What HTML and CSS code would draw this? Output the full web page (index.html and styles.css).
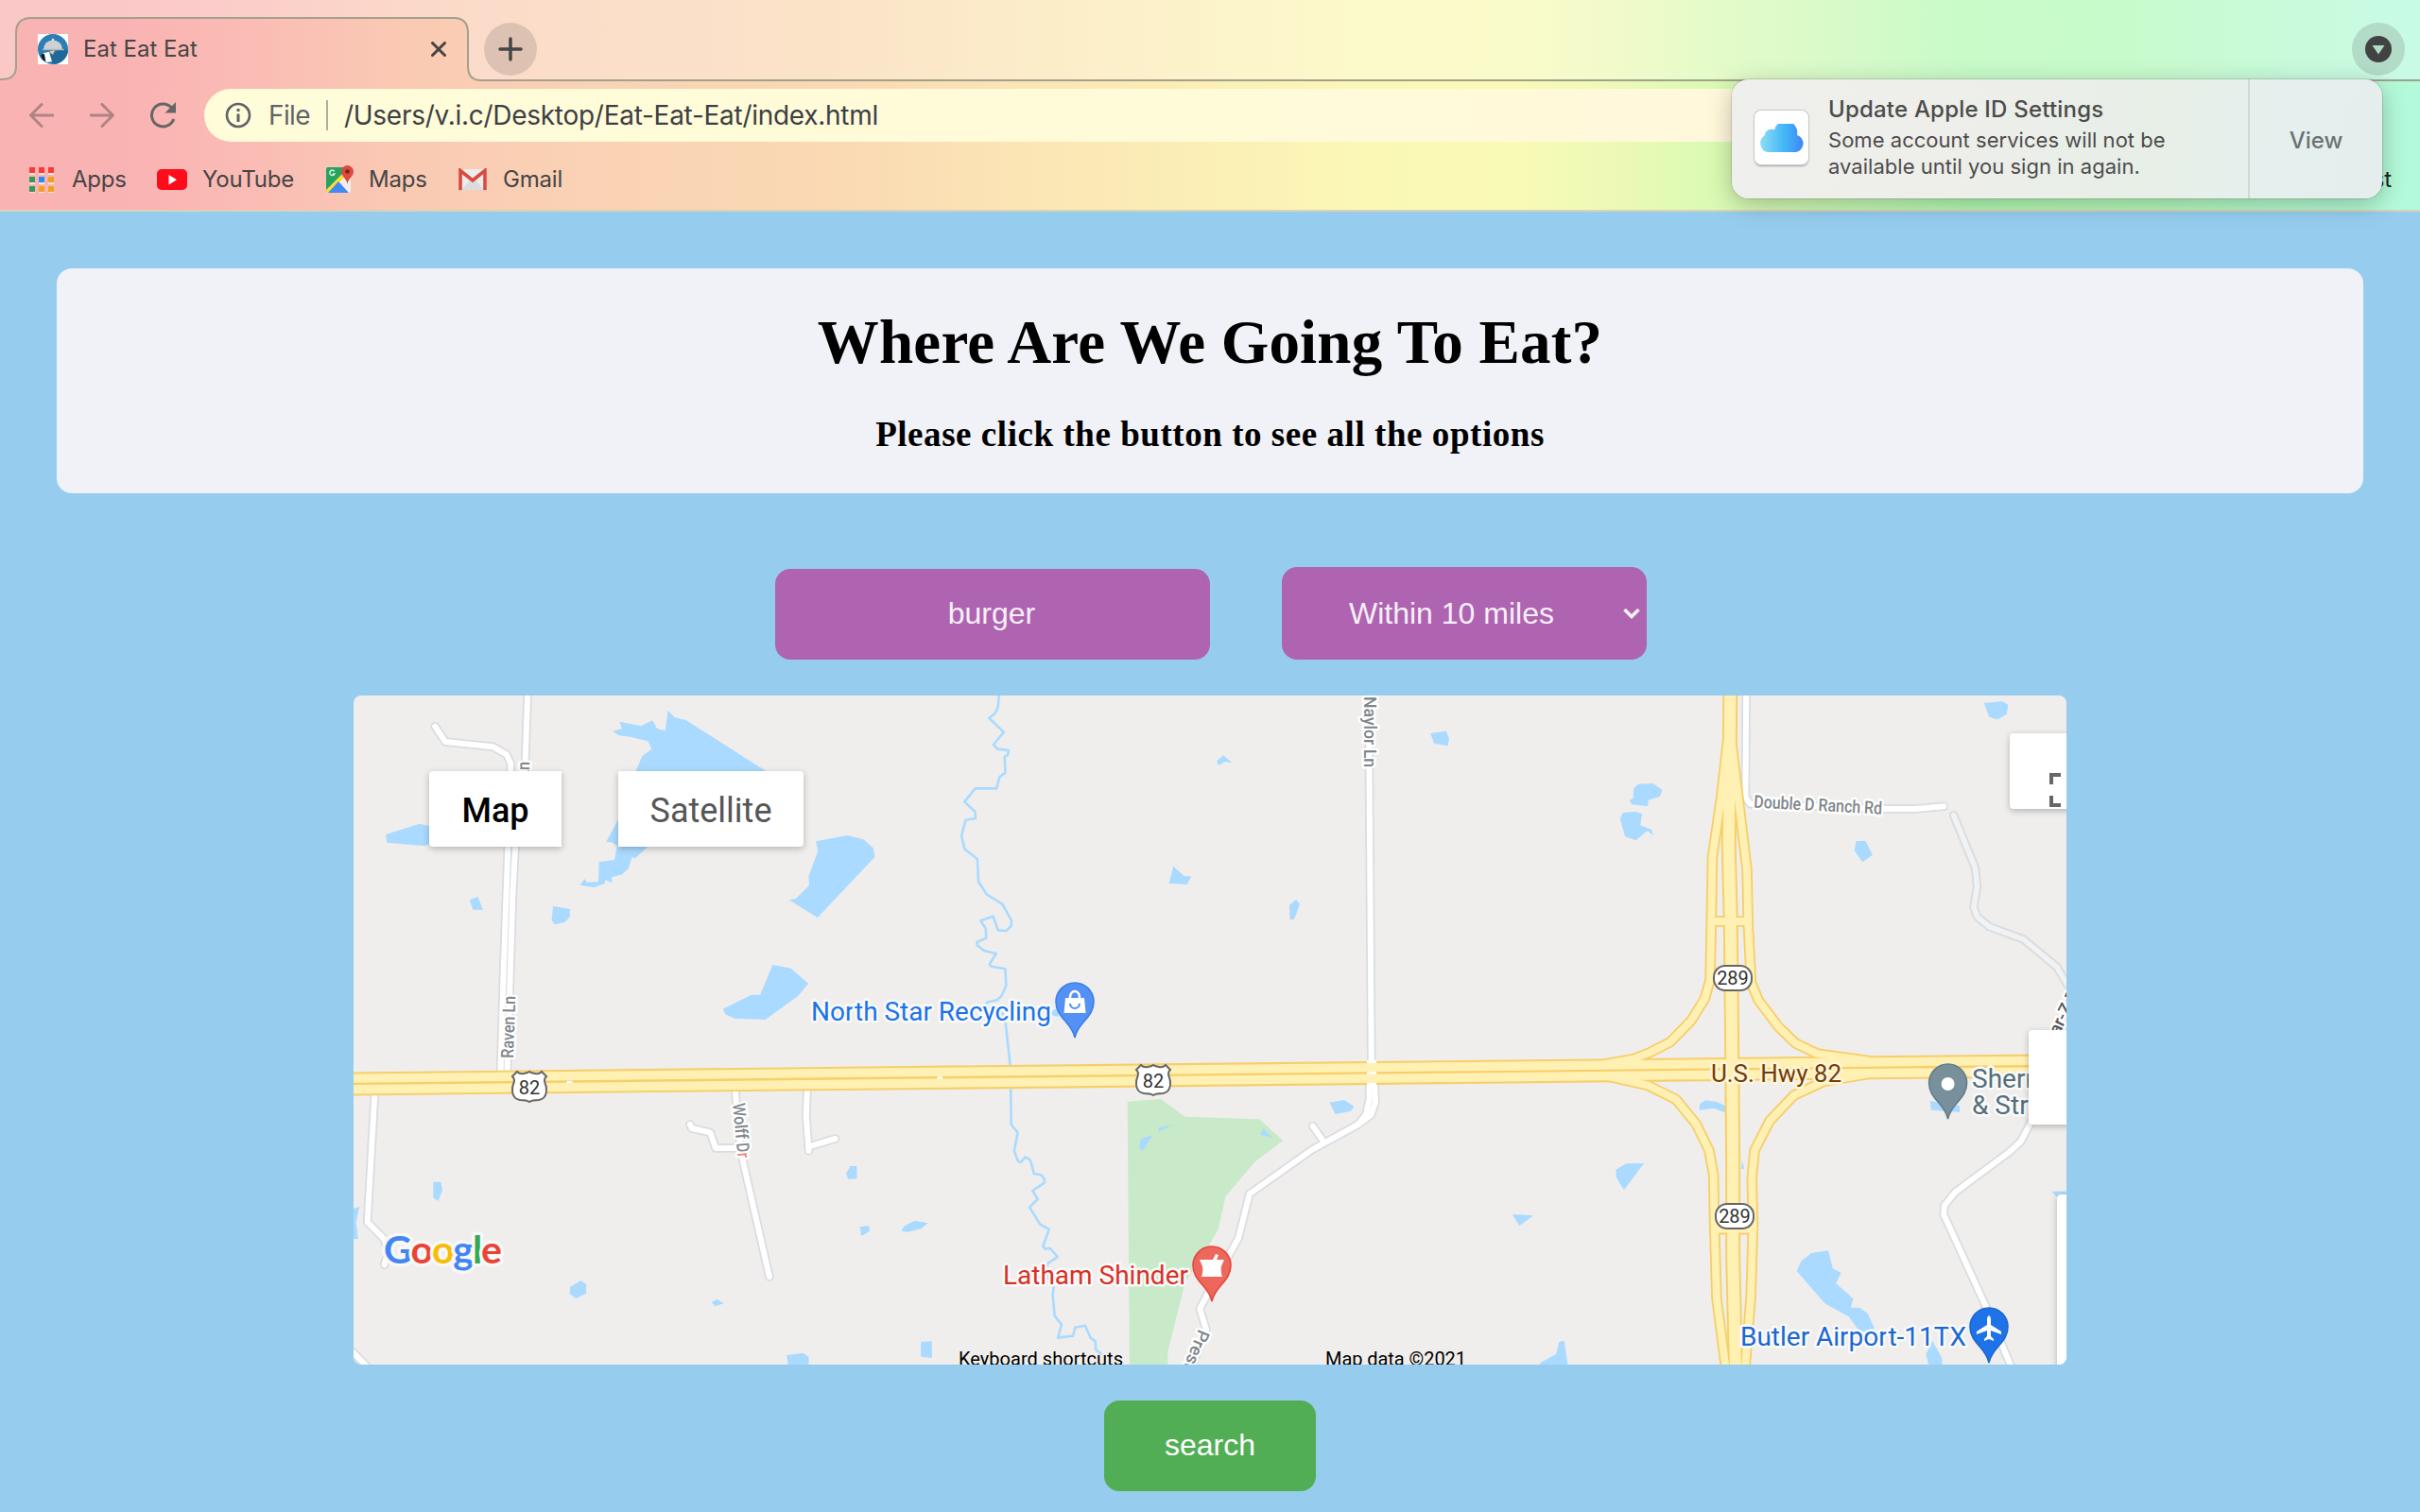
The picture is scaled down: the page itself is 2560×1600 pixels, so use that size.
FILE: index.html
```html
<!DOCTYPE html>
<html lang="en">
<head>
<meta charset="utf-8">
<title>Eat Eat Eat</title>
<link rel="stylesheet" href="styles.css">
</head>
<body>
<header class="chrome">
  <svg class="strip-shape" viewBox="0 0 2560 86" width="2560" height="86">
    <path fill="#fff" fill-opacity=".28" d="M0 0H2560V85H509Q495 85 495 70V35Q495 19 480 19H33Q17 19 17 35V70Q17 85 2 85H0Z"/>
    <path fill="none" stroke="#a3a18c" stroke-width="2" d="M2560 85H509Q495 85 495 70V35Q495 19 480 19H33Q17 19 17 35V70Q17 84 2 84H0"/>
  </svg>
  <div class="tabs">
    <svg class="favicon" viewBox="0 0 32 32" width="32" height="32">
      <rect width="32" height="32" fill="#fff"/><circle cx="16" cy="16" r="16" fill="#2b7fb4"/>
      <path d="M27 15L32 18A16 16 0 0 1 17 32L10 23Z" fill="#20689a"/>
      <path d="M6 16A10 9.5 0 0 1 26 16Z" fill="#cfd2d4"/><circle cx="16" cy="6" r="1.3" fill="#e6e6e6"/>
      <path d="M5 16.5H28" stroke="#aeb6ba" stroke-width="1.4"/><path d="M12 18.5L18 17L16 22Z" fill="#edc3a0"/>
      <path d="M6 20L12 19L15 29L9 30Z" fill="#fff"/><path d="M3 22L7 21L8 29L5 27Z" fill="#16191c"/>
    </svg>
    <span class="tab-title">Eat Eat Eat</span>
    <svg class="tab-close" viewBox="0 0 16 16" width="16" height="16"><path d="M1.500 1.500L14.500 14.500M14.500 1.500L1.500 14.500" stroke="#454545" stroke-width="3" stroke-linecap="round"/></svg>
    <span class="round-btn new-tab"><svg viewBox="0 0 26 26" width="26" height="26"><path d="M13 2V24M2 13H24" stroke="#454545" stroke-width="3.500" stroke-linecap="round"/></svg></span>
    <span class="round-btn tab-search"><svg viewBox="0 0 28 28" width="28" height="28"><circle cx="14" cy="14" r="14" fill="#424242"/><path d="M7.500 10H20.500L14 19.500Z" fill="#aeddc5"/></svg></span>
  </div>
  <div class="toolbar">
    <svg class="nav" viewBox="0 0 26 26" width="26" height="26"><path d="M25 13H2M13 1.500L1.500 13L13 24.500" class="nav-arrow"/></svg>
    <svg class="nav" viewBox="0 0 26 26" width="26" height="26"><path d="M1 13H24M13 1.500L24.500 13L13 24.500" class="nav-arrow"/></svg>
    <svg class="reload" viewBox="0 0 28 28" width="28" height="28"><path d="M22.500 6A12 12 0 1 0 24.800 18" fill="none" stroke="#666" stroke-width="3"/><path d="M27 0V11.500H15.500Z" fill="#666"/></svg>
    <div class="omnibox">
      <svg viewBox="0 0 28 28" width="28" height="28"><circle cx="14" cy="14" r="12" fill="none" stroke="#5f6368" stroke-width="2.600"/><path d="M14 12.500V21M14 7V10" stroke="#5f6368" stroke-width="3"/></svg>
      <span class="scheme">File</span><i class="sep"></i><span class="url">/Users/v.i.c/Desktop/Eat-Eat-Eat/index.html</span>
    </div>
  </div>
  <div class="bookmarks">
    <span class="bm bm-apps"><svg viewBox="0 0 26 27" width="26" height="27">
      <path fill="#f5e3dc" d="M0 2h6v6H0zM10 2h6v6h-6zM20 2h6v6h-6zM0 12h6v6H0zM10 12h6v6h-6zM20 12h6v6h-6zM0 22h6v5H0zM10 22h6v5h-6zM20 22h6v5h-6z"/>
      <path fill="#f93a37" d="M0 0h6v6H0zM10 0h6v6h-6zM20 0h6v6h-6z"/><path fill="#35995c" d="M0 10h6v6H0zM0 20h6v6H0z"/><path fill="#2b8af5" d="M10 10h6v6h-6z"/><path fill="#efa023" d="M20 10h6v6h-6zM10 20h6v6h-6zM20 20h6v6h-6z"/></svg><span>Apps</span></span>
    <span class="bm bm-youtube"><svg viewBox="0 0 32 22" width="32" height="22"><rect width="32" height="22" rx="5" fill="#fe0b1c"/><path d="M12.500 6V16.500L21 11.200Z" fill="#fff"/></svg><span>YouTube</span></span>
    <span class="bm bm-maps"><svg viewBox="0 0 30 30" width="30" height="30"><rect x="1" y="2" width="26" height="27" rx="2" fill="#eef0f0"/><path d="M1 4Q1 2 3 2H21L20 11L3 28Q1 28 1 26Z" fill="#25a35f"/><path d="M1 26L18 9L21 12L4 29Q1 29 1 26Z" fill="#fbdd3b"/><path d="M3 29L14 17L25 29Z" fill="#4488f3"/><path d="M23.500 20C23 14 17 12 17 6.500A6.500 6.500 0 0 1 30 6.500C30 12 24 14 23.500 20Z" fill="#dd4b3f"/><circle cx="23.500" cy="6.500" r="2.300" fill="#7c231d"/><path d="M9.800 6.300A2.700 2.700 0 1 0 10 9H7.800" fill="none" stroke="#d8f0e2" stroke-width="1.500"/></svg><span>Maps</span></span>
    <span class="bm bm-gmail"><svg viewBox="0 0 32 24" width="32" height="24"><rect x="1" y="1" width="30" height="22" rx="2" fill="#ececec"/><path d="M4 23L13 13L16 15L19 13L28 23Z" fill="#dcdcdc"/><path d="M3 23V2.500L16 13L29 2.500V23" fill="none" stroke="#d94a3f" stroke-width="3.600"/></svg><span>Gmail</span></span>
    <span class="reading">Reading List</span>
  </div>
</header>

<aside class="notice">
  <div class="notice-icon"><svg viewBox="0 0 48 30" width="48" height="30">
    <defs><linearGradient id="cl" x1="0" x2="1"><stop offset="0" stop-color="#8fdcf4"/><stop offset=".55" stop-color="#43b8f8"/><stop offset="1" stop-color="#3f86f3"/></linearGradient></defs>
    <path fill="url(#cl)" d="M9 30A9 9.500 0 0 1 5.500 12.500A7.500 7.500 0 0 1 16 6.500A12 12 0 0 1 40 12A9.300 9.300 0 0 1 39 30Z"/></svg></div>
  <div class="notice-text"><strong>Update Apple ID Settings</strong><p><span>Some account services will not be</span><br><span class="l2">available until you sign in again.</span></p></div>
  <div class="notice-action">View</div>
</aside>

<main class="page">
  <section class="card">
    <h1>Where Are We Going To Eat?</h1>
    <h2>Please click the button to see all the options</h2>
  </section>
  <form class="controls">
    <div class="field food">burger</div>
    <div class="field radius"><span>Within 10 miles</span><svg viewBox="0 0 20 14" width="20" height="14"><path d="M2.500 3L10 10.500L17.500 3" fill="none" stroke="#f6f0f7" stroke-width="3.600"/></svg></div>
  </form>
  <div class="map">
    <svg class="map-canvas" viewBox="374 736 1812 708" width="1812" height="708">
      <defs>
        <g id="local-west"><path d="M232 116L260 165L390 181L426 205L438 235L436 300L430 500L418 900L410 1215"/><path d="M484 0L477 235L450 500L443 650L428 1215"/><path d="M68 1280L48 1690L95 1745L103 1790L94 1825"/><path d="M0 2092L50 2152"/><path d="M1048 1267L1056 1400L1070 1500L1141 1863"/><path d="M925 1380L930 1392L980 1405L995 1455L1060 1455"/><path d="M1244 1267L1241 1350L1248 1463L1248 1450L1320 1425"/></g>
        <g id="local-mid"><path d="M1254 0L1262 1250"/><path d="M1256 1245V1300L1246 1350L1225 1380"/><path d="M1270 1245L1272 1310L1260 1350L1225 1380L1100 1460L930 1600L900 1740L815 1920L795 1965L812 2030L770 2160"/><path d="M1102 1385L1130 1432"/></g>
        <g id="local-east"><path d="M690 0L688 340L700 362L1050 378L1135 378L1210 370"/><path d="M1450 1350L1412 1435L1385 1465L1240 1595L1212 1637L1210 1665L1320 1955L1395 2170"/></g>
        <path id="private" d="M1236 398L1293 565L1298 625L1289 690L1298 720L1330 752L1420 792L1508 880L1540 945"/>
        <g id="ramps"><path d="M640 170L623 350L601 530L598 740L595 920L581 980L545 1050L490 1118L435 1152L395 1171L310 1190"/><path d="M652 170L670 350L692 570L695 740L703 930L722 985L775 1070L820 1122L877 1155L1010 1177"/><path d="M310 1223L430 1255L505 1300L558 1378L592 1462L604 1540L606 1680L612 1930L638 2170"/><path d="M1010 1220L895 1243L815 1288L752 1368L712 1462L705 1550L708 1700L702 1930L686 2170"/><path d="M600 735H695M605 1712H708"/></g>
        <path id="trunk" d="M648 0L646 240L644 500L649 730L652 1080L655 1500L655 1800L662 2150"/>
        <path id="hwy-n" d="M370 1141.200L960 1134.700L1570 1128.500L1973 1124L2190 1122"/>
        <path id="hwy-s" d="M370 1152.800L960 1146.500L1570 1140L1973 1135.600L2190 1133.500"/>
        <path id="pin" d="M0 0C-3 -16 -20 -21 -20 -38A20 20 0 1 1 20 -38C20 -21 3 -16 0 0Z"/>
        <path id="shield" d="M-13 -16Q-10 -13 -6 -14Q-2 -14.500 0 -16Q2 -14.500 6 -14Q10 -13 13 -16L18 -11Q15 -8 16.500 -4Q18.500 0 18 5Q17 13 10 14Q3 14 0 16Q-3 14 -10 14Q-17 13 -18 5Q-18.500 0 -16.500 -4Q-15 -8 -18 -11Z"/>
      </defs>
      <rect x="374" y="736" width="1812" height="708" fill="#efeeec"/>
      <path fill="#c8eac9" transform="translate(960 730) scale(.38903 .33333)" d="M598 1307L688 1299L755 1355L955 1363L962 1368L1021 1431L945 1498L865 1608L845 1713L810 1783L755 1880L708 2100V2160H604Z"/>
      <g class="water">
        <path transform="translate(370 730) scale(.38903 .33333)" d="M734 101L740 124L714 131L733 145L765 150L811 163L821 188L795 211L778 258L730 412L697 483L713 484L727 496L720 540L678 546L676 609L645 611L638 600L626 620L665 627L693 615L695 604L713 612L712 595L741 586L758 567L767 532L777 534L808 500L900 400L1132 258L914 96L883 87L865 65L858 129L836 124L823 97L792 115ZM98 459L190 425L240 440V485L201 495L101 485ZM326 667L349 657L362 698H335ZM553 687L599 696V720L585 737L557 745L549 731ZM1268 481L1352 462L1397 475L1423 502L1428 530L1272 723L1194 667L1213 663L1249 621L1248 590L1273 512ZM1150 873L1200 884L1247 932L1219 972L1130 1047L1046 1043L1021 1030L1015 1013L1091 969L1116 968ZM227 1562H248L252 1588L241 1622L227 1613ZM10 1647L26 1641L17 1692L23 1743H10ZM599 1896L628 1875L643 1887V1916L615 1932L598 1918ZM984 1944L999 1935L1017 1948L993 1957ZM1349 1537L1361 1512H1379V1552L1356 1553ZM1387 1705L1411 1701L1414 1718L1391 1734ZM1500 1718L1507 1703L1535 1685L1572 1693L1554 1711L1516 1721ZM1188 2112L1232 2105L1248 2118V2150H1193ZM1553 2070L1583 2068V2121L1553 2117Z"/>
        <path transform="translate(960 730) scale(.38903 .33333)" d="M1422 138L1465 131L1473 155L1469 178L1432 170ZM841 226L859 208L882 231L863 229L846 240ZM723 560L753 592H772L760 618L711 614ZM1057 666L1067 680L1051 730L1040 729L1038 683ZM1148 1310L1187 1302L1214 1322L1206 1337L1163 1347ZM380 1030L410 1008V1037ZM681 1390L719 1381L684 1403ZM635 1424L667 1413L641 1463L629 1455ZM967 1391L992 1422L960 1412Z"/>
        <path transform="translate(1570 730) scale(.40179 .33333)" d="M1316 42L1365 37L1380 48L1375 78L1352 94L1330 86ZM406 299L445 297L469 318L463 338L432 350L431 370L389 364L383 350L392 345L394 313ZM365 391L397 386L416 394L411 430L440 443L446 461L429 448L400 478L371 466L358 410ZM979 481L1004 479L1023 524L996 547L975 511ZM567 1315L583 1303L610 1307L635 1320V1342L604 1328L567 1334ZM347 1523L374 1504L421 1503L368 1588L348 1548ZM74 1665L130 1669L93 1701ZM679 1495L685 1520L677 1521ZM823 1845L835 1813L862 1788L906 1780L918 1837L940 1851L926 1884L972 1933L965 1961H988L1010 1980L1028 2028L990 2040L960 1990L897 1948ZM1174 1305L1252 1320V1341L1177 1334ZM1494 1592H1540V1610H1508ZM148 2136L190 2108L197 2070L211 2066L221 2150H148ZM1180 2066L1205 2120L1207 2150H1172L1163 2110Z"/>
      </g>
      <path class="river" transform="translate(960 730) scale(.38903 .33333)" d="M250 0L246 55L238 75L222 90L262 134L234 174L245 188L275 192L272 208L264 212L266 263L250 277L242 313H184L155 355L184 387L185 408L158 413L147 463L155 505L190 537L193 609L216 650L258 680L283 733L282 750L268 765L246 763L233 719L199 733L213 758L214 788L189 801V810L208 828L241 837L223 871L228 878L266 886L268 940L255 973L243 985L215 992V1010L240 1015L262 1030L268 1070L280 1200L282 1380L300 1405L290 1463L300 1495L308 1500L320 1483L334 1493L344 1536L364 1540L373 1555L372 1565L340 1590L354 1617L332 1642L360 1696L385 1713L368 1767L375 1775L388 1773L408 1800L380 1822L378 1860L398 1890L395 1920L400 1987L419 2015L409 2057L450 2051L456 2024L483 2018L498 2057L511 2068L512 2095L528 2110"/>
      <g class="local-case"><use href="#local-west" transform="translate(370 730) scale(.38903 .33333)"/><use href="#local-mid" transform="translate(960 730) scale(.38903 .33333)"/><use href="#local-east" transform="translate(1570 730) scale(.40179 .33333)"/><use href="#private" transform="translate(1570 730) scale(.40179 .33333)"/></g>
      <g class="local-fill"><use href="#local-west" transform="translate(370 730) scale(.38903 .33333)"/><use href="#local-mid" transform="translate(960 730) scale(.38903 .33333)"/><use href="#local-east" transform="translate(1570 730) scale(.40179 .33333)"/></g>
      <use class="private-fill" href="#private" transform="translate(1570 730) scale(.40179 .33333)"/>
      <g class="major-case"><use class="w-hwy" href="#hwy-n"/><use class="w-hwy" href="#hwy-s"/><g transform="translate(1570 730) scale(.40179 .33333)"><use class="w-ramp" href="#ramps"/><use class="w-trunk" href="#trunk"/></g></g>
      <path d="M526 1130V1138M534 1130V1138M1446 1122H1456V1152H1446Z" fill="#fff" stroke="#fff" stroke-width="0"/>
      <g class="major-fill"><g transform="translate(1570 730) scale(.40179 .33333)"><use class="w-ramp" href="#ramps"/><use class="w-trunk" href="#trunk"/></g><use class="w-hwy" href="#hwy-n"/><use class="w-hwy" href="#hwy-s"/></g>
      <path d="M599.500 1145H605.500M991.500 1140.600H997" stroke="#fff" stroke-width="2.500"/>

      <g class="street">
        <text transform="translate(1443 737) rotate(90)" textLength="75" lengthAdjust="spacingAndGlyphs">Naylor Ln</text>
        <text transform="translate(543 1120) rotate(-88)" textLength="66" lengthAdjust="spacingAndGlyphs">Raven Ln</text>
        <text transform="translate(559 872) rotate(-89)" textLength="66" lengthAdjust="spacingAndGlyphs">Raven Ln</text>
        <text transform="translate(775 1168) rotate(84.500)" textLength="58" lengthAdjust="spacingAndGlyphs">Wolff D<tspan fill="#e88a82">r</tspan></text>
        <text transform="translate(1268 1406) rotate(112)">Preston Rd</text>
        <text transform="translate(2178 1096) rotate(-64)" fill="#555">ar-Z Dr</text>
        <text transform="translate(1855 854.500) rotate(3)" textLength="136" lengthAdjust="spacingAndGlyphs">Double D Ranch Rd</text>
      </g>
      <g class="shields">
        <use href="#shield" x="560" y="1150"/><text x="560" y="1158">82</text>
        <use href="#shield" x="1220" y="1143"/><text x="1220" y="1151">82</text>
        <rect x="1813" y="1022" width="40" height="26" rx="12"/><text x="1833" y="1042">289</text>
        <rect x="1815" y="1274" width="40" height="26" rx="12"/><text x="1835" y="1294">289</text>
      </g>
      <g class="poi">
        <text x="1810" y="1145" textLength="138" class="hwy-name">U.S. Hwy 82</text>
        <text x="858" y="1080" textLength="254" fill="#1a73e8">North Star Recycling</text>
        <text x="1061" y="1359" textLength="196" fill="#d93025">Latham Shinder</text>
        <text x="1841" y="1424" textLength="239" fill="#1967d2">Butler Airport-11TX</text>
        <text x="2086" y="1151" fill="#546e7a">Sherm</text>
        <text x="2086" y="1179" fill="#546e7a">&amp; Stru</text>
      </g>
      <g stroke-width="1.600">
        <g transform="translate(1137 1098)"><use href="#pin" fill="#5491f5" stroke="#3b7ded"/><path fill="#fff" d="M-10 -42H10L11.500 -26H-11.500Z"/><path d="M-5 -41V-43A5 6 0 0 1 5 -43V-41" fill="none" stroke="#fff" stroke-width="2.500"/><path d="M-5 -36A5 5 0 0 0 5 -36" fill="none" stroke="#5491f5" stroke-width="2.200"/></g>
        <g transform="translate(1282 1377)"><use href="#pin" fill="#ee675c" stroke="#e4463a"/><path fill="#fff" d="M-13 -44H1L4 -50L7 -49L5 -44H13L10 -37Q9 -31 11 -26H-11Q-9 -31 -10 -37Z"/></g>
        <g transform="translate(2060.600 1184)"><use href="#pin" fill="#78909c" stroke="#607d8b"/><circle cy="-37" r="7" fill="#fff"/></g>
        <g transform="translate(2104 1442)"><use href="#pin" fill="#1f73e8" stroke="#1967d2"/><path fill="#fff" d="M0 -50Q2 -49 2 -46V-40L13 -33V-30L2 -34V-28L5 -25V-23L0 -25L-5 -23V-25L-2 -28V-34L-13 -30V-33L-2 -40V-46Q-2 -49 0 -50Z"/></g>
      </g>
      <text class="brand" x="406" y="1337" textLength="125"><tspan fill="#4285f4">G</tspan><tspan fill="#ea4335">o</tspan><tspan fill="#fbbc05">o</tspan><tspan fill="#4285f4">g</tspan><tspan fill="#34a853">l</tspan><tspan fill="#ea4335">e</tspan></text>
      <g class="legal"><text x="1014" y="1445" textLength="174">Keyboard shortcuts</text><text x="1402" y="1445" textLength="149">Map data ©2021</text></g>
    </svg>
    <div class="map-types"><button class="type on">Map</button><button class="type sat">Satellite</button></div>
    <div class="ctl fullscreen"><svg viewBox="0 0 36 36" width="36" height="36"><path d="M12 2H2V12M2 24V34H12" fill="none" stroke="#666" stroke-width="4"/></svg></div>
    <div class="ctl pegman"></div>
    <div class="ctl zoom"></div>
  </div>
  <button class="search">search</button>
</main>
</body>
</html>
```
FILE: styles.css
```css
* { box-sizing: border-box; }
body { margin: 0; width: 2560px; height: 1600px; overflow: hidden; position: relative; background: #96cdef; font-family: "Liberation Sans", Arial, sans-serif; }
button { border: 0; font: inherit; padding: 0; }

.chrome {
  position: relative; height: 224px; border-bottom: 2px solid #d8d3b6;
  display: grid; grid-template-rows: 86px 72px 64px;
  font-family: Inter, "Noto Sans", sans-serif; color: #454545;
  background: linear-gradient(90deg, #fab3b3 0, #fab3b3 130px, #fabdb5 280px, #facab3 430px, #fad2b5 620px, #fad9b3 880px, #fbe5b5 1080px, #fbefb6 1280px, #fbf8b6 1450px, #f9fab6 1600px, #eef9b6 1700px, #dcfab3 1800px, #c8f9b4 1950px, #b3fab3 2080px, #b3fab8 2250px, #b3facb 2400px, #b3fadc 2560px);
}
.strip-shape { position: absolute; left: 0; top: 0; }
.tabs, .toolbar, .bookmarks { position: relative; display: flex; align-items: center; }
.tabs { padding: 18px 16px 0 40px; }
.tab-title { margin-left: 16px; width: 368px; font-size: 24px; padding-bottom: 2px; }
.tab-close { margin-right: 40px; }
.round-btn { width: 56px; height: 56px; border-radius: 50%; display: grid; place-items: center; background: rgba(70, 60, 60, .16); }
.tab-search { margin-left: auto; }
.toolbar { padding-left: 31px; }
.nav { margin-right: 38px; }
.nav-arrow { fill: none; stroke: #403c3c; stroke-opacity: .4; stroke-width: 3; stroke-linecap: round; }
.reload { margin-right: 29px; }
.omnibox { width: 2150px; height: 56px; border-radius: 28px; background: linear-gradient(90deg, #fffcda 0, #fffbd9 50%, #fff8db 75%, #ffe9d8 90%); padding-left: 22px; display: flex; align-items: center; font-size: 28px; }
.scheme { margin-left: 18px; width: 61px; color: #5f6368; letter-spacing: -.6px; }
.sep { width: 2px; height: 32px; background: #afaf9d; margin-right: 17px; }
.url { color: #3c3f43; white-space: nowrap; letter-spacing: -.28px; }
.bookmarks { padding-left: 31px; font-size: 24px; letter-spacing: -.2px; }
.bm { display: flex; align-items: center; }
.bm > span, .reading { padding-bottom: 2px; }
.bm-apps { gap: 19px; width: 135px; }
.bm-youtube { gap: 16px; width: 178px; }
.bm-maps { gap: 16px; width: 140px; }
.bm-gmail { gap: 16px; }
.reading { margin-left: auto; margin-right: 30px; color: #222; }

.notice {
  position: absolute; left: 1832px; top: 84px; width: 688px; height: 126px; border-radius: 18px; z-index: 2;
  display: grid; grid-template-columns: 102px 444px 1fr;
  background: linear-gradient(100deg, #efefed, #eeeeea 35%, #e7efe7 65%, #e5efee 85%, #e6eeed);
  box-shadow: 0 0 0 1px rgba(0, 0, 0, .12), 0 6px 26px rgba(0, 0, 0, .25);
  font-family: Inter, "Noto Sans", sans-serif; color: #4c4c4b;
}
.notice-icon { width: 57px; height: 57px; margin: 33px 0 0 24px; background: #fff; border-radius: 7px; box-shadow: 0 0 0 1px #c9c9c9, 0 2px 2px rgba(0, 0, 0, .3); display: grid; place-items: center; }
.notice-text { padding-top: 16px; white-space: nowrap; }
.notice-text strong { display: block; font-size: 24px; line-height: 32px; font-weight: 500; letter-spacing: .2px; }
.notice-text p { margin: 2px 0 0; font-size: 22px; line-height: 28px; letter-spacing: .03px; }
.notice-action { border-left: 2px solid #cfd8d5; display: grid; place-items: center; font-size: 24px; font-weight: 500; color: #6c7271; padding-top: 3px; }

.page { display: flex; flex-direction: column; align-items: center; padding-top: 60px; }
.card { width: 2440px; height: 238px; border-radius: 16px; background: #f1f2f7; text-align: center; color: #000; font-family: "Liberation Serif", "Times New Roman", serif; }
h1 { margin: 39px 0 0; font-size: 65px; line-height: 78px; letter-spacing: .2px; }
h2 { margin: 36px 0 0; font-size: 37px; line-height: 46px; letter-spacing: .55px; }
.controls { display: flex; align-items: flex-end; gap: 76px; margin-top: 78px; width: 922px; margin-left: 2px; }
.field { background: #af64b1; color: #f6f0f7; border-radius: 16px; font-size: 32px; display: flex; align-items: center; }
.food { width: 460px; height: 96px; justify-content: center; padding: 0 2px 2px 0; }
.radius { width: 386px; height: 98px; padding: 0 6px 0 71px; justify-content: space-between; }
.map { position: relative; width: 1812px; height: 708px; margin-top: 38px; border-radius: 8px; overflow: hidden; font-family: Roboto, sans-serif; }
.map-canvas { display: block; }
.search { width: 224px; height: 96px; margin-top: 38px; border-radius: 16px; background: #51ae55; color: #fff; font-size: 32px; padding-bottom: 2px; }

.map-canvas path, .map-canvas use { vector-effect: non-scaling-stroke; }
.water { fill: #aadaff; }
.river { fill: none; stroke: #aadaff; stroke-width: 2.6; stroke-linejoin: round; }
.local-case, .local-fill, .private-fill, .major-case, .major-fill { fill: none; stroke-linejoin: round; }
.local-case { stroke: #dadce0; stroke-width: 9.5; stroke-linecap: round; }
.local-fill { stroke: #fff; stroke-width: 6; stroke-linecap: round; }
.private-fill { stroke: #f1f2f3; stroke-width: 5.500; stroke-linecap: round; }
.major-case { stroke: #f6cf6a; }
.major-fill { stroke: #fff0b3; }
.major-case .w-hwy { stroke-width: 13.500; }
.major-fill .w-hwy { stroke-width: 9.300; }
.major-case .w-ramp { stroke-width: 11.500; }
.major-fill .w-ramp { stroke-width: 7.800; }
.major-case .w-trunk { stroke-width: 16; }
.major-fill .w-trunk { stroke-width: 12; }
.map-canvas text { paint-order: stroke; stroke-linejoin: round; stroke: #fff; }
.street { font-size: 18.500px; fill: #80868b; font-weight: 500; }
.map-canvas .street text { stroke-width: 5; }
.shields { fill: #fff; stroke: #666; stroke-width: 2; }
.map-canvas .shields text { fill: #333; stroke: none; font-size: 20px; text-anchor: middle; }
.poi { font-size: 28px; }
.map-canvas .poi text { stroke-width: 5; stroke: #fafafa; }
.map-canvas .poi .hwy-name { fill: #733b0b; stroke: #fff6d6; font-size: 26px; }
.map-canvas .brand { font-family: Lato, sans-serif; font-size: 41px; font-weight: 700; stroke: #f8f8f7; stroke-width: 7; }
.map-canvas .legal text { font-size: 20px; fill: #000; stroke: none; }

.map-types { position: absolute; left: 80px; top: 80px; display: flex; gap: 60px; }
.type { height: 80px; background: #fff; font-size: 36px; color: #565656; padding-top: 3px; box-shadow: 0 2px 7px rgba(0, 0, 0, .25); }
.on { width: 140px; color: #000; font-weight: 500; border-radius: 4px 0 0 4px; }
.sat { width: 196px; border-radius: 0 4px 4px 0; }
.ctl { position: absolute; background: #fff; box-shadow: 0 2px 7px rgba(0, 0, 0, .25); border-radius: 4px 0 0 4px; }
.fullscreen { left: 1752px; top: 40px; width: 80px; height: 80px; padding: 42px 0 0 42px; overflow: hidden; }
.pegman { left: 1772px; top: 354px; width: 80px; height: 100px; }
.zoom { left: 1802px; top: 528px; width: 80px; height: 200px; }
```
